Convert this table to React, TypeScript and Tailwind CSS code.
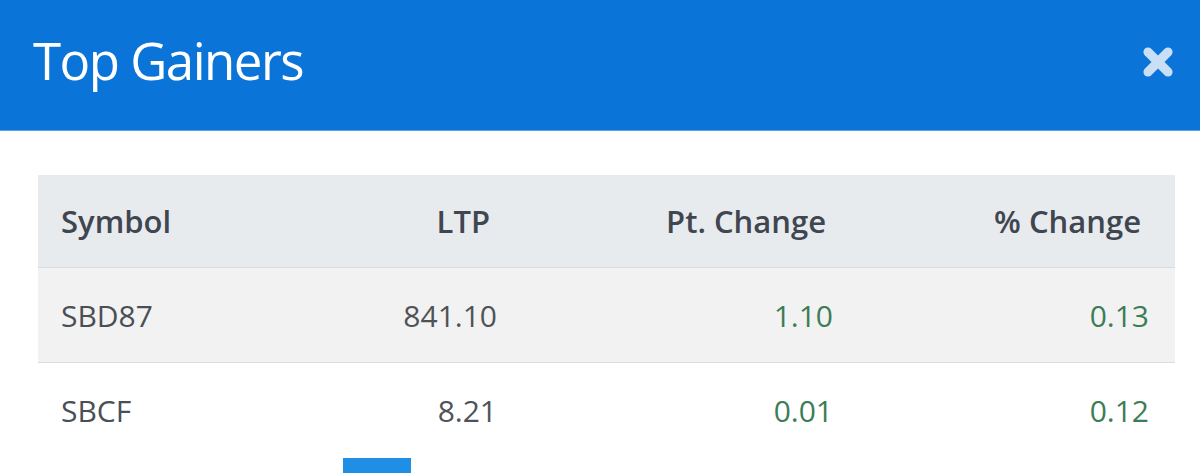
import { X } from "lucide-react";

// ─── Top Gainers modal ───────────────────────────────────────────────────────

interface Row {
  symbol: string;
  ltp: string;
  pt: string;
  pct: string;
}

const rows: Row[] = [
  { symbol: "SBD87", ltp: "841.10", pt: "1.10", pct: "0.13" },
  { symbol: "SBCF", ltp: "8.21", pt: "0.01", pct: "0.12" },
];

const cols = "grid grid-cols-[262px_223px_336px_316px]";

export default function App() {
  return (
    <div
      className="w-[1200px] h-[473px] overflow-hidden bg-white"
      style={{ fontFamily: '"Open Sans", "Noto Sans", sans-serif' }}
    >
      {/* Header */}
      <div className="h-[131px] bg-[#0b74d8] border-b border-[#5aa2e6] flex items-center justify-between pl-[33px] pr-[22px]">
        <h1 className="text-[51px] leading-none text-white tracking-[-1.5px] -mt-[10px]">Top Gainers</h1>
        <X size={40} strokeWidth={5.5} className="text-[#c9dff5] -mt-[6px]" />
      </div>

      {/* Table */}
      <div className="pt-[44px] pl-[38px]">
        <div className="w-[1137px]">
          <div className={`${cols} h-[93px] items-center bg-[#e8ebee] border-b border-[#d9dde1] text-[31px] font-semibold text-[#3f4650]`}>
            <div className="pl-[23px]">Symbol</div>
            <div className="text-right pr-[33px]">LTP</div>
            <div className="text-right pr-[33px]">Pt. Change</div>
            <div className="text-right pr-[34px]">% Change</div>
          </div>
          {rows.map((r, i) => (
            <div
              key={r.symbol}
              className={`${cols} h-[95px] items-center text-[30px] ${
                i === 0 ? "bg-[#f2f2f2] border-b border-[#dcdcdc]" : "bg-white"
              }`}
            >
              <div className="pl-[23px] text-[#4a4f55]">{r.symbol}</div>
              <div className="text-right pr-[26px] text-[#4f5358]">{r.ltp}</div>
              <div className="text-right pr-[26px] text-[#3c7d55]">{r.pt}</div>
              <div className="text-right pr-[26px] text-[#3c7d55]">{r.pct}</div>
            </div>
          ))}
        </div>
        <div className="ml-[305px] w-[68px] h-[20px] bg-[#1f8fe6]" />
      </div>
    </div>
  );
}
